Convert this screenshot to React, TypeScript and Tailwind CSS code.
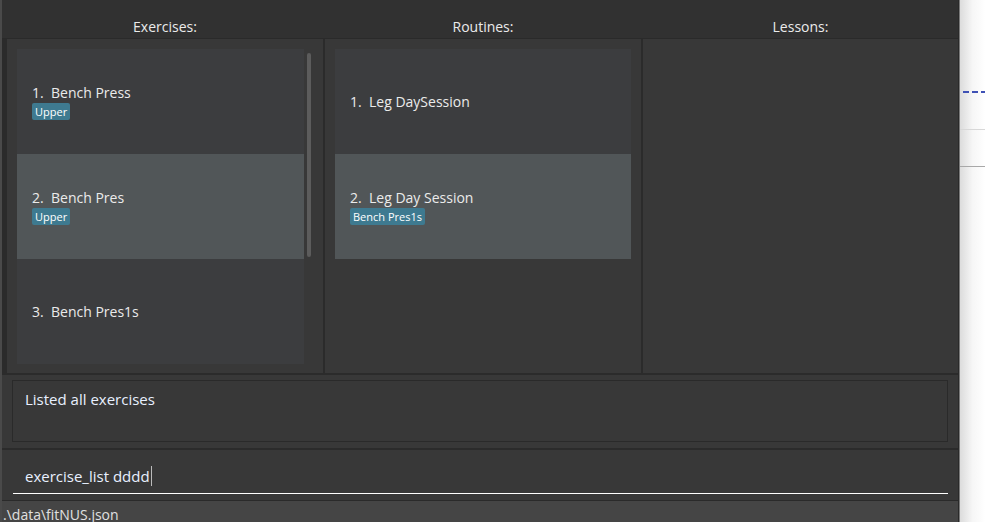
import React from "react";

type Item = { name: string; tags: string[]; selected?: boolean };

const exercises: Item[] = [
  { name: "Bench Press", tags: ["Upper"] },
  { name: "Bench Pres", tags: ["Upper"], selected: true },
  { name: "Bench Pres1s", tags: [] },
];

const routines: Item[] = [
  { name: "Leg DaySession", tags: [] },
  { name: "Leg Day Session", tags: ["Bench Pres1s"], selected: true },
];

function Card({ item, index }: { item: Item; index: number }) {
  return (
    <div
      className={`flex h-[105px] shrink-0 flex-col justify-center pl-[15px] ${
        item.selected ? "bg-[#515658]" : "bg-[#3c3d3f]"
      }`}
    >
      <div className="flex text-[14px] leading-[19px] text-[#ebebeb]">
        <span className="w-[19px]">{index + 1}.</span>
        <span>{item.name}</span>
      </div>
      {item.tags.length > 0 && (
        <div className="mt-[1px] flex gap-1">
          {item.tags.map((t) => (
            <span
              key={t}
              className="rounded-[2px] bg-[#3e7a90] px-[3px] text-[11px] leading-[17px] text-white"
            >
              {t}
            </span>
          ))}
        </div>
      )}
    </div>
  );
}

export default function App() {
  return (
    <div
      className="flex h-[522px] w-[985px] overflow-hidden bg-white"
      style={{ fontFamily: '"Open Sans", "Noto Sans", sans-serif' }}
    >
      {/* app window */}
      <div className="flex h-full w-[959px] shrink-0 flex-col border-l-2 border-r border-l-[#4a4a4a] border-r-[#2a2a2a] bg-[#383838]">
        <div className="flex h-[39px] shrink-0 gap-[2px] border-b border-[#2a2a2a] bg-[#313131] pl-[5px] text-[14px] text-[#ebebeb]">
          <div className="flex w-[316px] items-end justify-center pb-[1px]">Exercises:</div>
          <div className="flex w-[316px] items-end justify-center pb-[1px]">Routines:</div>
          <div className="flex flex-1 items-end justify-center pb-[1px]">Lessons:</div>
        </div>

        <div className="flex h-[336px] shrink-0 gap-[2px] border-b-2 border-[#2b2b2b] bg-[#2b2b2b] pl-[5px]">
          <div className="relative flex w-[316px] flex-col bg-[#383838] py-[10px] pl-[10px] pr-[19px]">
            {exercises.map((e, i) => (
              <Card key={i} item={e} index={i} />
            ))}
            <div className="absolute left-[300px] top-[14px] h-[204px] w-[4px] rounded-full bg-[#5c5c5c]" />
          </div>
          <div className="flex w-[316px] flex-col bg-[#383838] p-[10px]">
            {routines.map((r, i) => (
              <Card key={i} item={r} index={i} />
            ))}
          </div>
          <div className="flex-1 bg-[#383838]" />
        </div>

        <div className="h-[75px] shrink-0 border-b-2 border-[#2b2b2b] pb-[6px] pl-[10px] pr-[10px] pt-[5px]">
          <div className="h-full border border-[#2a2a2a] px-[12px] pt-[8px] text-[15px] leading-[20px] text-[#e8f0ff]">
            Listed all exercises
          </div>
        </div>

        <div className="flex h-[50px] shrink-0 flex-col justify-end pb-[6px] pl-[11px] pr-[10px]">
          <div className="flex h-[30px] items-center border-b border-white pb-[5px] pl-[12px] text-[15px] text-[#e8f0ff]">
            exercise_list dddd
            <span className="ml-[1px] inline-block h-[20px] w-[1px] bg-[#bbbbbb]" />
          </div>
        </div>

        <div className="h-[22px] shrink-0 overflow-hidden border-t border-[#2a2a2a] bg-[#454545] pl-[1px] pt-[4px] text-[14px] leading-[20px] text-[#e0e0e0]">
          .\data\fitNUS.json
        </div>
      </div>

      {/* background page peeking on the right */}
      <div className="relative flex-1 border-l border-[#7a7a7a] bg-gradient-to-r from-[#dcdcdc] via-[#f6f6f6] to-white">
        <div className="absolute left-[3px] right-0 top-[91px] h-[2px] bg-[repeating-linear-gradient(90deg,#3f51b5_0_6px,transparent_6px_9px)]" />
        <div className="absolute left-0 right-0 top-[129px] h-[1px] bg-[#d8d8d8]" />
        <div className="absolute left-0 right-0 top-[166px] h-[1px] bg-[#a8a8a8]" />
      </div>
    </div>
  );
}
